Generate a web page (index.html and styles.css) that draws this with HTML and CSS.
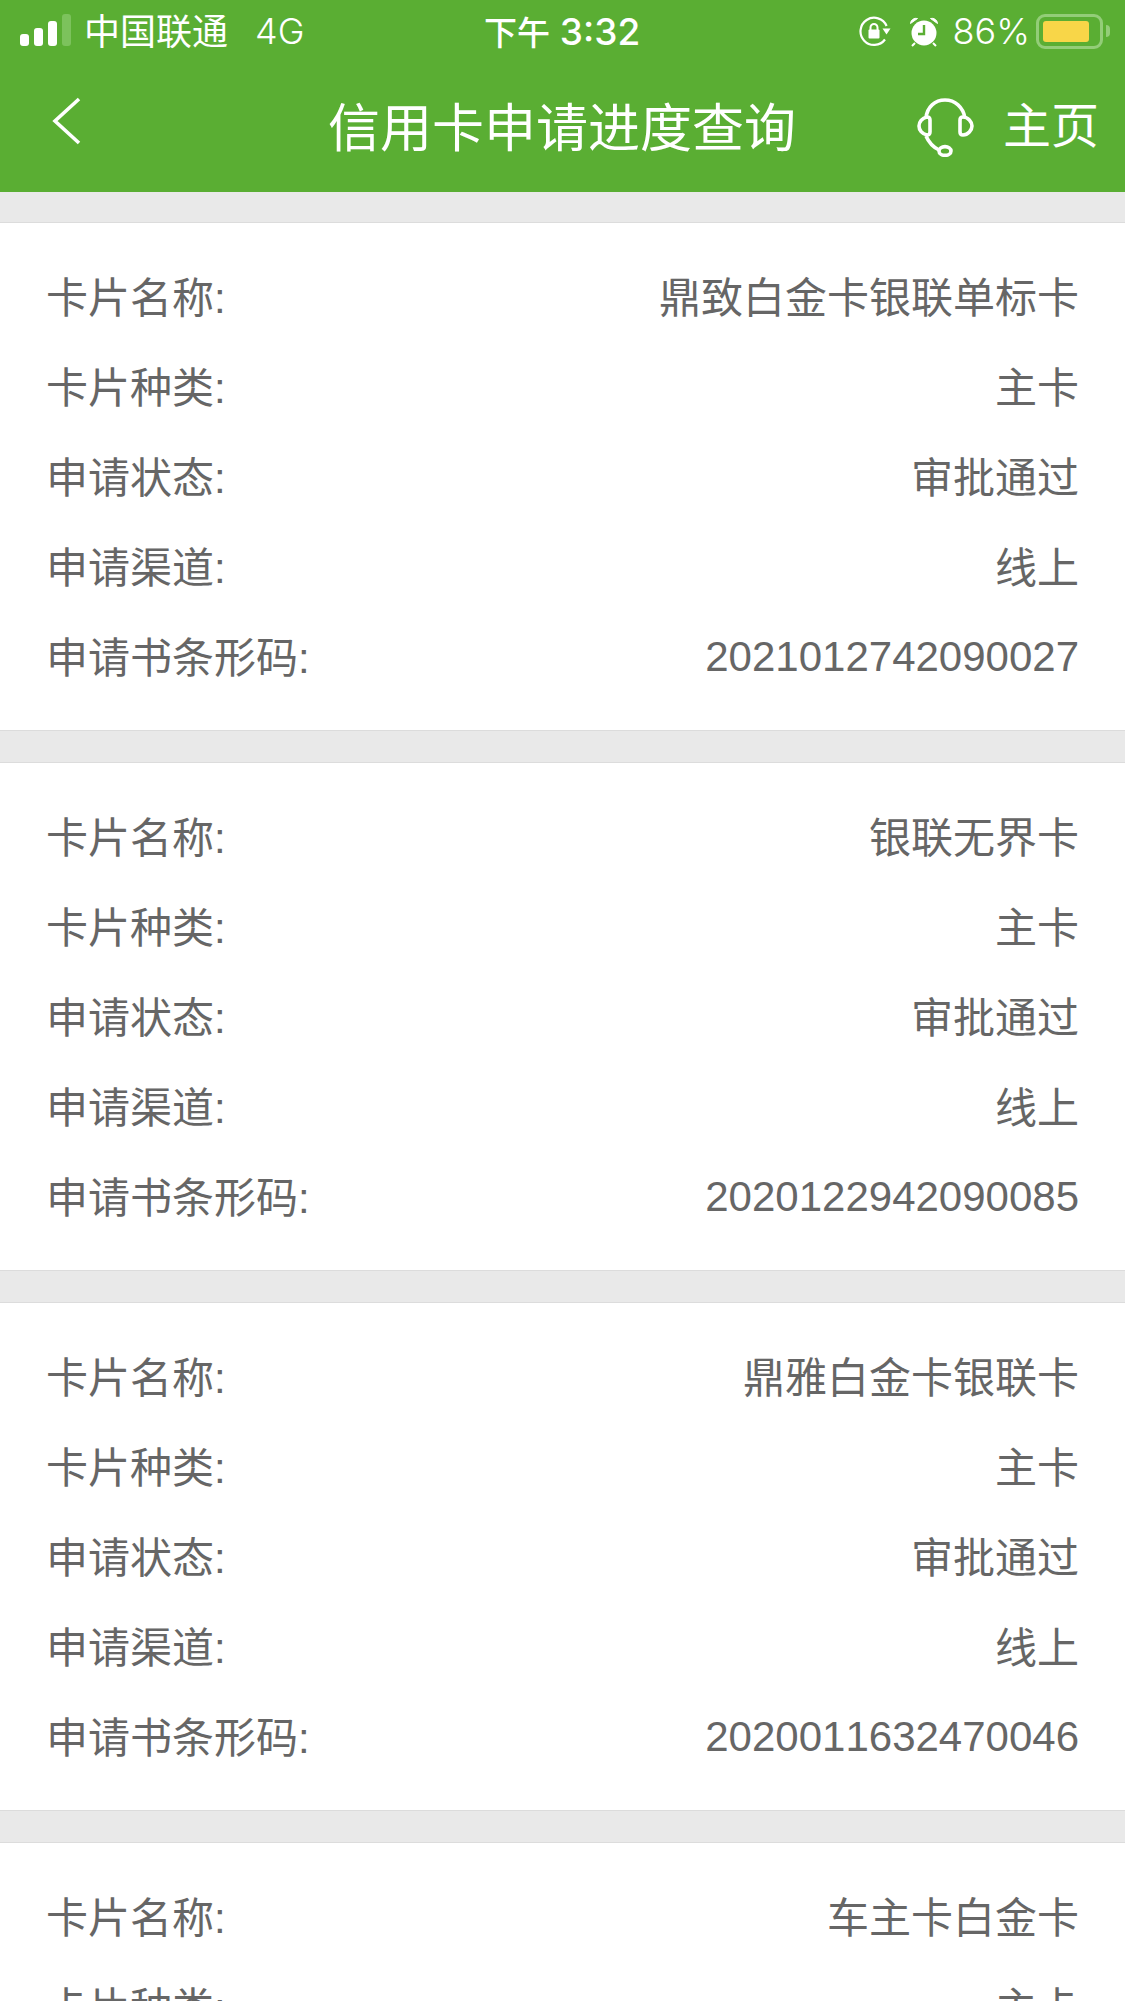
FILE: index.html
```html
<!DOCTYPE html>
<html lang="zh-CN">
<head>
    <meta charset="UTF-8">
    <meta name="viewport" content="width=device-width, initial-scale=1.0">
    <title>信用卡申请进度查询</title>
    <link rel="stylesheet" href="styles.css">
</head>
<body>
    <header class="top">
        <div class="status-bar">
            <div class="status-left">
                <div class="signal">
                    <span class="bar bar-1"></span>
                    <span class="bar bar-2"></span>
                    <span class="bar bar-3"></span>
                    <span class="bar bar-4"></span>
                </div>
                <span class="carrier">中国联通</span>
                <span class="network">4G</span>
            </div>
            <div class="clock"><span class="clock-cn">下午</span> 3:32</div>
            <div class="status-right">
                <svg class="icon-lock" width="32" height="32" viewBox="0 0 32 32">
                    <path d="M26 24.5A13.6 13.6 0 1 1 27.6 11" fill="none" stroke="#fff" stroke-width="2.2"/>
                    <path d="M23.5 13.5h8l-4 6z" fill="#fff"/>
                    <path d="M11.5 15v-2.5a3.5 3.5 0 0 1 7 0V15" fill="none" stroke="#fff" stroke-width="2"/>
                    <rect x="9.5" y="14.5" width="11" height="9" rx="1" fill="#fff"/>
                </svg>
                <svg class="icon-alarm" width="30" height="32" viewBox="0 0 30 32">
                    <circle cx="15" cy="18" r="12.5" fill="#fff"/>
                    <path d="M1.5 8.5a5.5 5.5 0 0 1 7-5zM28.5 8.5a5.5 5.5 0 0 0-7-5z" fill="#fff" stroke="#fff" stroke-width="1"/>
                    <path d="M6 28l-3 3M24 28l3 3" stroke="#fff" stroke-width="2"/>
                    <path d="M15 10v9h-6" fill="none" stroke="#5aae33" stroke-width="2.4"/>
                </svg>
                <span class="percent">86%</span>
                <div class="battery">
                    <div class="battery-level"></div>
                </div>
                <span class="battery-cap"></span>
            </div>
        </div>
        <nav class="nav-bar">
            <svg class="back" width="30" height="50" viewBox="0 0 30 50">
                <path d="M27 3L3 25l24 22" fill="none" stroke="#fff" stroke-width="3.6"/>
            </svg>
            <h1 class="title">信用卡申请进度查询</h1>
            <div class="nav-right">
                <svg class="headset" width="60" height="60" viewBox="0 0 60 60">
                    <path d="M10 21C11 10 19 3 29 3s18 7 20 18M10 39c3 7 7 11 13 14" fill="none" stroke="#fff" stroke-width="3.6"/>
                    <path d="M11 20c-5 1-8 5-8 9s3 8 8 9c2 0 3-1 3-3V23c0-2-1-3-3-3zM47 20c5 0 9 5 9 9s-4 9-9 9c-2 0-3-1-3-3V23c0-2 1-3 3-3z" fill="none" stroke="#fff" stroke-width="3.6"/>
                    <ellipse cx="29" cy="54" rx="6" ry="4.4" fill="none" stroke="#fff" stroke-width="3.6"/>
                </svg>
                <span class="home">主页</span>
            </div>
        </nav>
    </header>

    <main class="list">
        <section class="card">
            <div class="row"><span>卡片名称:</span><span>鼎致白金卡银联单标卡</span></div>
            <div class="row"><span>卡片种类:</span><span>主卡</span></div>
            <div class="row"><span>申请状态:</span><span>审批通过</span></div>
            <div class="row"><span>申请渠道:</span><span>线上</span></div>
            <div class="row"><span>申请书条形码:</span><span class="code">2021012742090027</span></div>
        </section>
        <section class="card">
            <div class="row"><span>卡片名称:</span><span>银联无界卡</span></div>
            <div class="row"><span>卡片种类:</span><span>主卡</span></div>
            <div class="row"><span>申请状态:</span><span>审批通过</span></div>
            <div class="row"><span>申请渠道:</span><span>线上</span></div>
            <div class="row"><span>申请书条形码:</span><span class="code">2020122942090085</span></div>
        </section>
        <section class="card">
            <div class="row"><span>卡片名称:</span><span>鼎雅白金卡银联卡</span></div>
            <div class="row"><span>卡片种类:</span><span>主卡</span></div>
            <div class="row"><span>申请状态:</span><span>审批通过</span></div>
            <div class="row"><span>申请渠道:</span><span>线上</span></div>
            <div class="row"><span>申请书条形码:</span><span class="code">2020011632470046</span></div>
        </section>
        <section class="card">
            <div class="row"><span>卡片名称:</span><span>车主卡白金卡</span></div>
            <div class="row"><span>卡片种类:</span><span>主卡</span></div>
        </section>
    </main>
</body>
</html>
```

FILE: styles.css
```css
:root {
    --green: #5aae33;
    --page: #e9e9e9;
    --line: #dcdcdc;
    --text: #666;
}

html, body {
    height: 2001px;
    overflow: hidden;
}

body {
    margin: 0;
    background-color: var(--page);
    color: var(--text);
    font-family: "Liberation Sans", "Noto Sans CJK SC", sans-serif;
    font-kerning: none;
}

.top {
    height: 192px;
    background-color: var(--green);
    color: #fff;
}

.status-bar {
    position: relative;
    display: flex;
    justify-content: space-between;
    align-items: center;
    height: 62px;
}

.status-left {
    display: flex;
    align-items: center;
    padding-left: 20px;
}

.signal {
    display: flex;
    align-items: flex-end;
    gap: 5px;
    height: 32px;
    margin-bottom: 2px;
}

.bar {
    width: 9px;
    border-radius: 3px;
    background-color: #fff;
}

.bar-1 { height: 12px; }
.bar-2 { height: 18px; }
.bar-3 { height: 25px; }
.bar-4 { height: 32px; background-color: #7cc25c; }

.carrier {
    margin-left: 13px;
    margin-bottom: 4px;
    font-size: 36px;
}

.network {
    margin-left: 27px;
    font-family: Inter, sans-serif;
    font-size: 36px;
    font-weight: 300;
}

.clock {
    position: absolute;
    left: 484px;
    font-family: Inter, "Noto Sans CJK SC", sans-serif;
    font-size: 37px;
    font-weight: 500;
}

.clock-cn {
    font-size: 33px;
}

.status-right {
    display: flex;
    align-items: center;
    padding-right: 15px;
}

.icon-lock {
    margin-right: 18px;
}

.percent {
    margin-left: 14px;
    margin-right: 6px;
    font-family: Inter, sans-serif;
    font-size: 36px;
    font-weight: 300;
}

.battery {
    box-sizing: border-box;
    width: 67px;
    height: 35px;
    padding: 4px;
    border: 3px solid #93cd78;
    border-radius: 9px;
}

.battery-level {
    width: 46px;
    height: 21px;
    border-radius: 3px;
    background-color: #f8d648;
}

.battery-cap {
    width: 4px;
    height: 12px;
    margin-left: 3px;
    border-radius: 0 6px 6px 0;
    background-color: #93cd78;
}

.nav-bar {
    position: relative;
    display: flex;
    justify-content: space-between;
    align-items: center;
    height: 130px;
}

.back {
    margin-left: 52px;
    margin-top: -12px;
}

.title {
    position: absolute;
    left: 328px;
    top: 34px;
    margin: 0;
    font-size: 52px;
    font-weight: 400;
    line-height: 66px;
}

.nav-right {
    display: flex;
    align-items: center;
    gap: 27px;
    padding-right: 26px;
}

.home {
    font-size: 48px;
    line-height: 66px;
}

.list {
    display: flex;
    flex-direction: column;
    gap: 31px;
    padding-top: 30px;
}

.card {
    flex: none;
    height: 450px;
    padding: 29px 0 28px;
    border-top: 1px solid var(--line);
    border-bottom: 1px solid var(--line);
    background-color: #fff;
}

.row {
    box-sizing: border-box;
    display: flex;
    justify-content: space-between;
    align-items: center;
    height: 90px;
    padding: 0 46px 6px 46px;
    font-size: 42px;
}

.code {
    margin-top: 6px;
}
```
